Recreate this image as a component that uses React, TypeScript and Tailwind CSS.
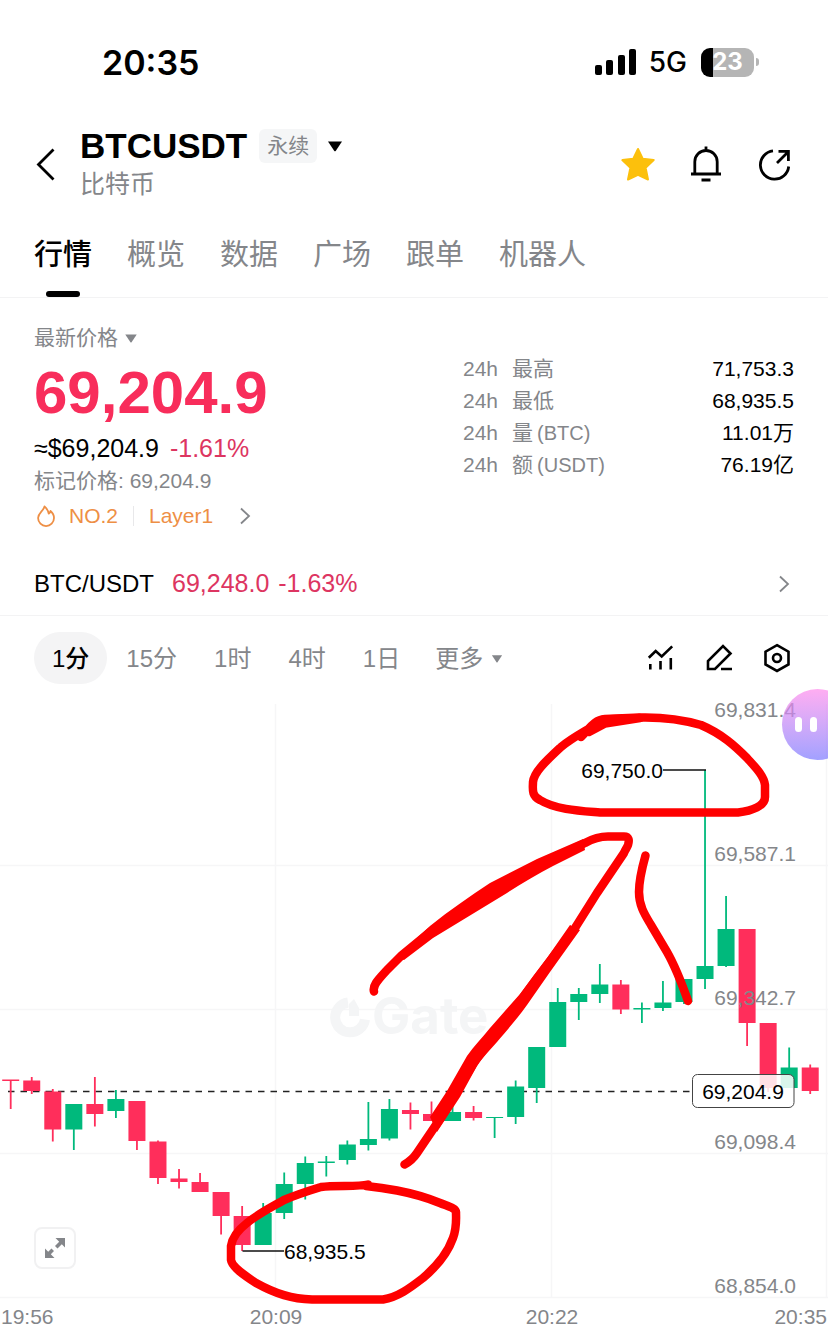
import { ReactNode, useState } from "react";

type Candle = {
    up: boolean;
    high: number;
    top: number;
    bottom: number;
    low: number;
};

const UP = "#00b97c";
const DOWN = "#ff2e5b";
const CANDLE_STEP = 21.04;
const CANDLE_WIDTH = 17;

const tabs = ["行情", "概览", "数据", "广场", "跟单", "机器人"];
const intervals = ["1分", "15分", "1时", "4时", "1日"];

const stats = [
    { label: "最高", unit: "", value: "71,753.3" },
    { label: "最低", unit: "", value: "68,935.5" },
    { label: "量", unit: "(BTC)", value: "11.01万" },
    { label: "额", unit: "(USDT)", value: "76.19亿" },
];

// up, high, body top, body bottom, low
const rows: [number, number, number, number, number][] = [
    [0, 1080, 1079.5, 1081, 1109],
    [0, 1077, 1080.5, 1091, 1094],
    [0, 1089, 1091.5, 1129.5, 1141.5],
    [1, 1104, 1104, 1129.5, 1150],
    [0, 1077, 1104, 1114, 1126.5],
    [1, 1090, 1099, 1111, 1118],
    [0, 1101, 1101, 1141, 1150],
    [0, 1140.5, 1141.5, 1178, 1184],
    [0, 1169, 1178.5, 1182, 1188.5],
    [0, 1173, 1182, 1192, 1192],
    [0, 1192, 1192, 1216, 1234.5],
    [0, 1206, 1216, 1245, 1251],
    [1, 1203, 1213, 1245, 1245],
    [1, 1172.5, 1184, 1213, 1219],
    [1, 1156.5, 1163, 1184, 1199.5],
    [1, 1156, 1161.5, 1163, 1176.5],
    [1, 1140.5, 1144.5, 1160, 1164.5],
    [1, 1102, 1139, 1145, 1150.5],
    [1, 1099, 1109, 1138.5, 1140.5],
    [0, 1102.5, 1110, 1114, 1129.5],
    [0, 1101.5, 1114, 1121, 1121],
    [1, 1103, 1112, 1121, 1121],
    [0, 1106, 1112, 1118, 1120.5],
    [1, 1117, 1117, 1118, 1138],
    [1, 1080.5, 1086.5, 1117, 1124],
    [1, 1047, 1047, 1088, 1103],
    [1, 988, 1002, 1047, 1047],
    [1, 988, 994, 1002, 1020],
    [1, 964, 984.5, 994, 1003],
    [0, 980, 984.5, 1009.5, 1014],
    [1, 1002.5, 1008, 1009.5, 1023],
    [1, 981, 1002.5, 1008, 1011],
    [1, 979, 979, 1002, 1004],
    [1, 770, 966, 979, 989],
    [1, 896, 929, 966, 967],
    [0, 929, 929, 1023, 1046],
    [0, 1023, 1023, 1088, 1092],
    [1, 1047.5, 1067.5, 1088, 1088],
    [0, 1064.5, 1067.5, 1091, 1094],
];

const candles: Candle[] = rows.map(([up, high, top, bottom, low]) => ({
    up: up === 1,
    high,
    top,
    bottom,
    low,
}));

const priceAxis = [
    { y: 717, text: "69,831.4" },
    { y: 861, text: "69,587.1" },
    { y: 1005, text: "69,342.7" },
    { y: 1149, text: "69,098.4" },
    { y: 1293, text: "68,854.0" },
];

function StatusBar() {
    return (
        <div className="flex h-[124px] items-center justify-between pr-[69px] pl-[102px] font-['Inter',sans-serif]">
            <span className="text-[34px] font-semibold">20:35</span>
            <div className="flex items-center">
                <svg width="42" height="28" viewBox="0 0 42 28" aria-label="Signal">
                    <rect x="0" y="17" width="7" height="10" rx="2" />
                    <rect x="11" y="12" width="7" height="15" rx="2" />
                    <rect x="23" y="7" width="7" height="20" rx="2" />
                    <rect x="34" y="1" width="7" height="26" rx="2" />
                </svg>
                <span className="ml-3 text-[28px] font-medium">5G</span>
                <div className="ml-3.5 flex items-center gap-0.5">
                    <div className="flex h-[29px] w-[53px] items-center justify-center rounded-[9px] bg-[linear-gradient(to_right,#000_23%,#b5b5b5_23%)] text-2xl font-bold text-white">
                        23
                    </div>
                    <div className="h-2 w-[3px] rounded-r-full bg-[#b5b5b5]" />
                </div>
            </div>
        </div>
    );
}

function Caret({ className }: { className: string }) {
    return (
        <svg viewBox="0 0 16 11" className={className} fill="currentColor">
            <path d="M1 .5h14L8.7 10a1 1 0 0 1-1.4 0z" />
        </svg>
    );
}

function Chevron() {
    return (
        <svg
            width="12"
            height="18"
            viewBox="0 0 12 18"
            fill="none"
            stroke="#84868a"
            strokeWidth="1.8"
        >
            <path d="M2 1.5 10 9l-8 7.5" />
        </svg>
    );
}

function IconButton({
    label,
    children,
}: {
    label: string;
    children: ReactNode;
}) {
    return (
        <button aria-label={label} className="cursor-pointer">
            {children}
        </button>
    );
}

function Header() {
    return (
        <header className="flex h-20 items-center pr-9 pl-[34px]">
            <IconButton label="Back">
                <svg
                    width="24"
                    height="36"
                    viewBox="0 0 24 36"
                    fill="none"
                    stroke="#000"
                    strokeWidth="2.8"
                >
                    <path d="M19.5 3.5 4.5 18.5l15 15" />
                </svg>
            </IconButton>
            <div className="ml-[22px] flex-1">
                <div className="flex h-10 items-center">
                    <h1 className="text-[35px] font-bold">BTCUSDT</h1>
                    <span className="ml-3 rounded-md bg-[#f5f6f7] px-2 text-[21px] leading-[34px] text-[#84868a]">
                        永续
                    </span>
                    <button aria-label="Switch contract" className="ml-2.5">
                        <Caret className="h-[11px] w-4" />
                    </button>
                </div>
                <p className="text-[25px] leading-9 text-[#84868a]">比特币</p>
            </div>
            <div className="flex items-center gap-8">
                <IconButton label="Favorite">
                    <svg width="36" height="36" viewBox="0 0 36 36">
                        <path
                            d="M18 3l4.700 9.800 11 1.300-8.100 7.600 2.400 11.800L18 28.800 8 33.500l2.400-11.800L2.300 14.100l11-1.300z"
                            fill="#fcc00c"
                            stroke="#fcc00c"
                            strokeWidth="2"
                            strokeLinejoin="round"
                        />
                    </svg>
                </IconButton>
                <IconButton label="Price alert">
                    <svg
                        width="36"
                        height="36"
                        viewBox="0 0 36 36"
                        fill="none"
                        stroke="#000"
                        strokeWidth="2.8"
                    >
                        <path d="M18 .5v4M6.800 28V15.700a11.200 11.200 0 0 1 22.400 0V28M3 28h30M13.500 34h9" />
                    </svg>
                </IconButton>
                <IconButton label="Share">
                    <svg
                        width="36"
                        height="36"
                        viewBox="0 0 36 36"
                        fill="none"
                        stroke="#000"
                        strokeWidth="2.8"
                    >
                        <path d="M32.700 20.500A14.200 14.200 0 1 1 17 4.900M21 17 32 6M22.500 5.400h9.900V15" />
                    </svg>
                </IconButton>
            </div>
        </header>
    );
}

function Tabs() {
    const [active, setActive] = useState(tabs[0]);

    return (
        <nav className="flex h-[94px] gap-[35px] border-b border-[#f3f3f4] pl-[34px]">
            {tabs.map((tab) => (
                <button
                    key={tab}
                    onClick={() => setActive(tab)}
                    className={`relative cursor-pointer pt-2.5 text-[29px] ${
                        tab === active
                            ? "font-medium text-black"
                            : "text-[#84868a]"
                    }`}
                >
                    {tab}
                    {tab === active && (
                        <span className="absolute bottom-0 left-3 h-1.5 w-[34px] rounded-full bg-black" />
                    )}
                </button>
            ))}
        </nav>
    );
}

function PriceSummary() {
    return (
        <section className="flex justify-between pt-[23px] pr-[34px] pb-[17px] pl-[34px]">
            <div>
                <button className="flex h-[34px] cursor-pointer items-center gap-1.5 text-[21px] text-[#84868a]">
                    最新价格
                    <Caret className="h-[9px] w-3.5" />
                </button>
                <p className="text-[60px] leading-[76px] font-bold text-[#f82d5b]">
                    69,204.9
                </p>
                <p className="text-[25px] leading-[34px]">
                    ≈$69,204.9{" "}
                    <span className="ml-1 text-[#dd3561]">-1.61%</span>
                </p>
                <p className="text-[21px] leading-8 text-[#84868a]">
                    标记价格: 69,204.9
                </p>
                <a
                    href="#rank"
                    className="flex h-[38px] items-center text-[21px] text-[#ee8f45]"
                >
                    <svg
                        width="24"
                        height="24"
                        viewBox="0 0 24 24"
                        fill="none"
                        stroke="currentColor"
                        strokeWidth="1.8"
                        strokeLinejoin="round"
                    >
                        <path d="M10.500 2.500c2.400 2 3.700 4.300 4.200 7.200.9-.5 1.500-1.400 1.800-2.700 2.300 1.900 3.500 4.300 3.500 7.100a7.900 7.900 0 0 1-15.900 0c0-2.700 1.500-4.600 3.200-6.500 1.400-1.600 2.700-2.900 3.200-5.100z" />
                    </svg>
                    <span className="ml-[11px]">NO.2</span>
                    <span className="mx-[15px] h-5 w-px bg-[#e8e8ea]" />
                    <span>Layer1</span>
                    <span className="ml-[26px]">
                        <Chevron />
                    </span>
                </a>
            </div>
            <dl className="w-[331px] pt-8 text-[21px] leading-8">
                {stats.map((s) => (
                    <div key={s.label} className="flex justify-between">
                        <dt className="text-[#84868a]">
                            <span className="mr-3.5">24h</span>
                            {s.label}
                            <span className="ml-1 text-xl">{s.unit}</span>
                        </dt>
                        <dd>{s.value}</dd>
                    </div>
                ))}
            </dl>
        </section>
    );
}

function SpotRow() {
    return (
        <a
            href="#spot"
            className="flex h-16 items-center border-b border-[#f3f3f4] pr-[38px] pl-[34px]"
        >
            <span className="text-2xl">BTC/USDT</span>
            <span className="ml-[18px] text-[25px] text-[#dd3561]">
                69,248.0 <span className="ml-0.5">-1.63%</span>
            </span>
            <span className="ml-auto">
                <Chevron />
            </span>
        </a>
    );
}

function ChartToolbar() {
    const [active, setActive] = useState(intervals[0]);

    return (
        <div className="flex items-center pt-4 pr-9 pb-4 pl-[34px] text-2xl">
            <div className="flex gap-px">
                {intervals.map((name) => (
                    <button
                        key={name}
                        onClick={() => setActive(name)}
                        className={`h-[52px] cursor-pointer rounded-full px-[18px] pt-0.5 ${
                            name === active
                                ? "bg-[#f4f4f5] font-medium text-black"
                                : "text-[#84868a]"
                        }`}
                    >
                        {name}
                    </button>
                ))}
                <button className="flex h-[52px] cursor-pointer items-center gap-2 pt-0.5 pl-4 text-[#84868a]">
                    更多
                    <Caret className="h-2 w-3" />
                </button>
            </div>
            <div className="ml-auto flex items-center gap-7">
                <IconButton label="Indicators">
                    <svg
                        width="30"
                        height="30"
                        viewBox="0 0 30 30"
                        fill="none"
                        stroke="#000"
                        strokeWidth="2.6"
                    >
                        <path d="M2.800 14.800 9.700 8l6 5.400 10.500-10M4.300 21v5.500M14.500 18v8.500M24.800 15v11.500" />
                    </svg>
                </IconButton>
                <IconButton label="Draw">
                    <svg
                        width="30"
                        height="30"
                        viewBox="0 0 30 30"
                        fill="none"
                        stroke="#000"
                        strokeWidth="2.6"
                    >
                        <path d="M4 26v-8L19 3l7.500 7.500L11 26zM17 26h11" />
                    </svg>
                </IconButton>
                <IconButton label="Chart settings">
                    <svg
                        width="30"
                        height="30"
                        viewBox="0 0 30 30"
                        fill="none"
                        stroke="#000"
                        strokeWidth="2.6"
                    >
                        <path d="M15 2.200 26.500 8.700v12.800L15 28 3.500 21.500V8.700z" />
                        <circle cx="15" cy="15" r="4" />
                    </svg>
                </IconButton>
            </div>
        </div>
    );
}

function Watermark() {
    return (
        <g fill="#f4f5f6">
            <path
                d="M348 1002.500a15 15 0 1 0 17 17"
                fill="none"
                stroke="#f4f5f6"
                strokeWidth="10"
            />
            <path d="M349 1004 354 999l5 9v8h-10z" />
            <text
                x="372"
                y="1034"
                fontSize="51"
                fontWeight="700"
                className="font-['Inter',sans-serif]"
            >
                Gate
            </text>
        </g>
    );
}

// Freehand marker strokes over the chart
function Marker() {
    return (
        <g
            fill="none"
            stroke="#fe0000"
            strokeWidth="8.500"
            strokeLinecap="round"
            strokeLinejoin="round"
        >
            <path d="M581 737C590 728 594 720 605 719L640 717.500C662 717 684 720 701 725C722 734 735 746 747 758C756 768 764 776 765 785V797C765 806 752 811 738 812.500H600C582 811 556 810 540 800C531 796 533 788 533 782C534 772 545 762 561 747C572 738 582 733 590 728" />
            <path d="M590 728 604 719.500 640 718 605 723.500 589 732z" fill="#fe0000" />
            <path d="M374 991.500C372 985 380 978 387 970L402 955L430 932L490 892L550 860L585 843C594 838 602 836.500 608 836.500H624C629 836.500 629.500 840 628 845C627 848 625 850 624 853L597 893L575 928L537 978L505 1022L475 1061L440 1119L417 1153C413 1159 409 1162 404.500 1164.500" />
            <path
                d="M396 957 430 926C450 910 470 896 490 883L537 859 583 839 585 850 553 866C538 874 522 883 507 893L433 938 404 960z"
                fill="#fe0000"
                stroke="none"
            />
            <path
                d="M580 930 550 972 527 1005C517 1019 508 1029 497 1042 490 1050 482 1058 477 1066L460 1097 437 1132 430 1117 447 1091 467 1056C474 1046 482 1038 490 1028L520 994 547 958 570 925z"
                fill="#fe0000"
                stroke="none"
            />
            <path d="M645.500 855.500C642 868 639 880 639 892C639 906 645 915 651 925L667 952C675 966 682 984 688 1001" />
            <path d="M368 1184.500C358 1187 335 1185 321 1187C308 1191 298 1194 284 1200C270 1208 258 1214 247 1223C238 1230 232 1238 231 1246V1260C232 1267 244 1275 256 1283C276 1294 292 1299 312 1299.500H383C398 1297 410 1288 423 1278C436 1267 448 1252 453 1238C457 1227 456 1220 456 1212C456 1208 447 1206 440 1203C423 1196 410 1193 397 1190.500C384 1188 376 1187 366 1186" />
        </g>
    );
}

function CandleChart() {
    return (
        <svg
            viewBox="0 700 828 636"
            className="block h-auto w-full text-[21px]"
            role="img"
            aria-label="BTCUSDT 1分"
        >
            <path
                d="M0 865.500H828M0 1009.500H828M0 1153.500H828M0 1297.500H828M275.500 704V1298M551.500 704V1298M826.500 704V1298"
                stroke="#f6f6f7"
                strokeWidth="1.500"
            />
            <Watermark />
            <path
                d="M8 1091.500H692"
                stroke="#222"
                strokeWidth="1.500"
                strokeDasharray="6.500 6"
            />
            {candles.map((c, i) => {
                const x = 10.7 + i * CANDLE_STEP;
                const color = c.up ? UP : DOWN;
                return (
                    <g key={i} fill={color}>
                        <rect
                            x={x - 0.9}
                            y={c.high}
                            width={1.8}
                            height={c.low - c.high}
                        />
                        <rect
                            x={x - CANDLE_WIDTH / 2}
                            y={c.top}
                            width={CANDLE_WIDTH}
                            height={c.bottom - c.top}
                        />
                    </g>
                );
            })}
            <g fill="#84868a">
                {priceAxis.map((p) => (
                    <text key={p.text} x="796" y={p.y} textAnchor="end">
                        {p.text}
                    </text>
                ))}
                <text x="1" y="1324">
                    19:56
                </text>
                <text x="276" y="1324" textAnchor="middle">
                    20:09
                </text>
                <text x="552" y="1324" textAnchor="middle">
                    20:22
                </text>
                <text x="827" y="1324" textAnchor="end">
                    20:35
                </text>
            </g>
            <path
                d="M663 770H706M242.500 1251H284"
                stroke="#111"
                strokeWidth="1.500"
            />
            <text x="663" y="778" textAnchor="end">
                69,750.0
            </text>
            <text x="284" y="1259">
                68,935.5
            </text>
            <rect
                x="692.500"
                y="1074.500"
                width="101.500"
                height="33"
                rx="5"
                fill="#fff"
                fillOpacity=".85"
                stroke="#444"
            />
            <text x="743" y="1099" textAnchor="middle">
                69,204.9
            </text>
            <Marker />
        </svg>
    );
}

export default function App() {
    return (
        <main className="overflow-x-clip bg-white font-['Liberation_Sans','Noto_Sans_CJK_SC',sans-serif] text-black">
            <StatusBar />
            <Header />
            <Tabs />
            <PriceSummary />
            <SpotRow />
            <ChartToolbar />
            <div className="relative">
                <CandleChart />
                {/* Fullscreen toggle */}
                <button
                    aria-label="Fullscreen"
                    className="absolute bottom-[67px] left-[34px] flex size-[42px] cursor-pointer items-center justify-center rounded-lg border-2 border-[#f1f1f2] bg-white"
                >
                    <svg width="20" height="20" viewBox="0 0 20 20" fill="#84868a">
                        <path d="M10.500 0H20v9.500l-3.200-3.200-4.300 4.200-2.500-2.500 4.200-4.300zM0 10.500l3.200 3.200 3.300-3.200L9 13l-3.200 3.300L9.500 20H0z" />
                    </svg>
                </button>
                {/* Floating assistant bubble */}
                <button
                    aria-label="Assistant"
                    className="absolute -top-[11px] -right-[25px] flex size-[71px] cursor-pointer items-center gap-2 rounded-full bg-linear-to-b from-[#ff8aec]/70 to-[#7a78ff]/70 pl-[13px]"
                >
                    <span className="h-[15px] w-[7px] rounded-full bg-white" />
                    <span className="h-[15px] w-[7px] rounded-full bg-white" />
                </button>
            </div>
        </main>
    );
}
